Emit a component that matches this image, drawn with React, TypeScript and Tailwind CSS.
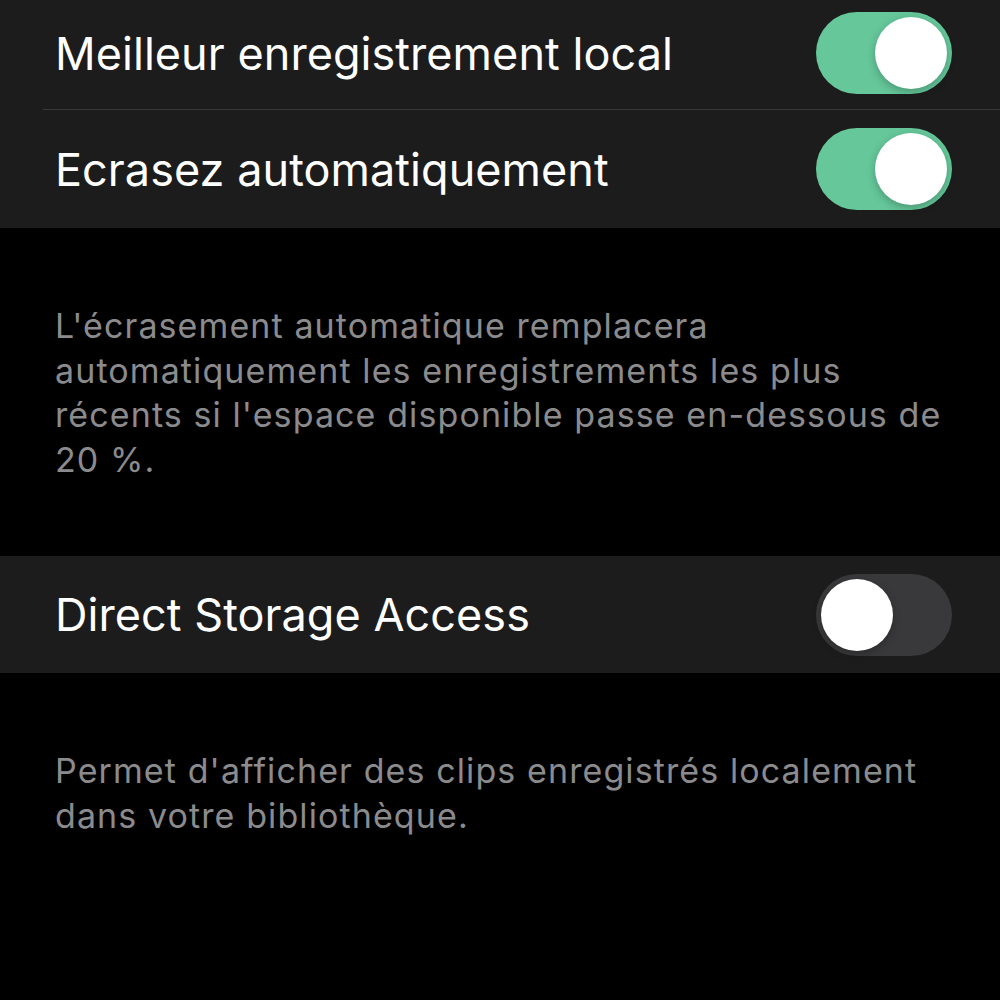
import React from "react";

function Toggle({ on }: { on: boolean }) {
  return (
    <div
      className={
        "relative h-[82px] w-[136px] shrink-0 rounded-full " +
        (on ? "bg-[#65c79a]" : "bg-[#39393b]")
      }
    >
      <div
        className={
          "absolute top-[5px] h-[72px] w-[72px] rounded-full bg-white shadow-[0_3px_8px_rgba(0,0,0,0.25)] " +
          (on ? "right-[5px]" : "left-[5px]")
        }
      />
    </div>
  );
}

function Row({ label, on, h }: { label: string; on: boolean; h: string }) {
  return (
    <div className={"flex items-center justify-between bg-[#1c1c1c] pl-[55px] pr-[48px] " + h}>
      <span className="text-[45px] leading-none text-white tracking-[0.05px]">{label}</span>
      <Toggle on={on} />
    </div>
  );
}

export default function App() {
  return (
    <div
      className="h-[1000px] w-[1000px] overflow-hidden bg-black"
      style={{ fontFamily: "Inter, 'Noto Sans', sans-serif" }}
    >
      <Row label="Meilleur enregistrement local" on={true} h="h-[109px] pb-[3px]" />
      <div className="bg-[#1c1c1c] pl-[43px]">
        <div className="h-px bg-[#3a3a3a]" />
      </div>
      <Row label="Ecrasez automatiquement" on={true} h="h-[118px]" />
      <div className="h-[328px] pl-[55px] pr-[50px] pt-[76px] text-[34px] leading-[44.5px] tracking-[1.1px] text-[#8b8b8d]">
        L'écrasement automatique remplacera automatiquement les enregistrements les plus récents si l'espace disponible passe en-dessous de 20&nbsp;%.
      </div>
      <Row label="Direct Storage Access" on={false} h="h-[117px]" />
      <div className="pl-[55px] pr-[50px] pt-[76px] text-[34px] leading-[44.5px] tracking-[1.1px] text-[#8b8b8d]">
        Permet d'afficher des clips enregistrés localement dans votre bibliothèque.
      </div>
    </div>
  );
}
